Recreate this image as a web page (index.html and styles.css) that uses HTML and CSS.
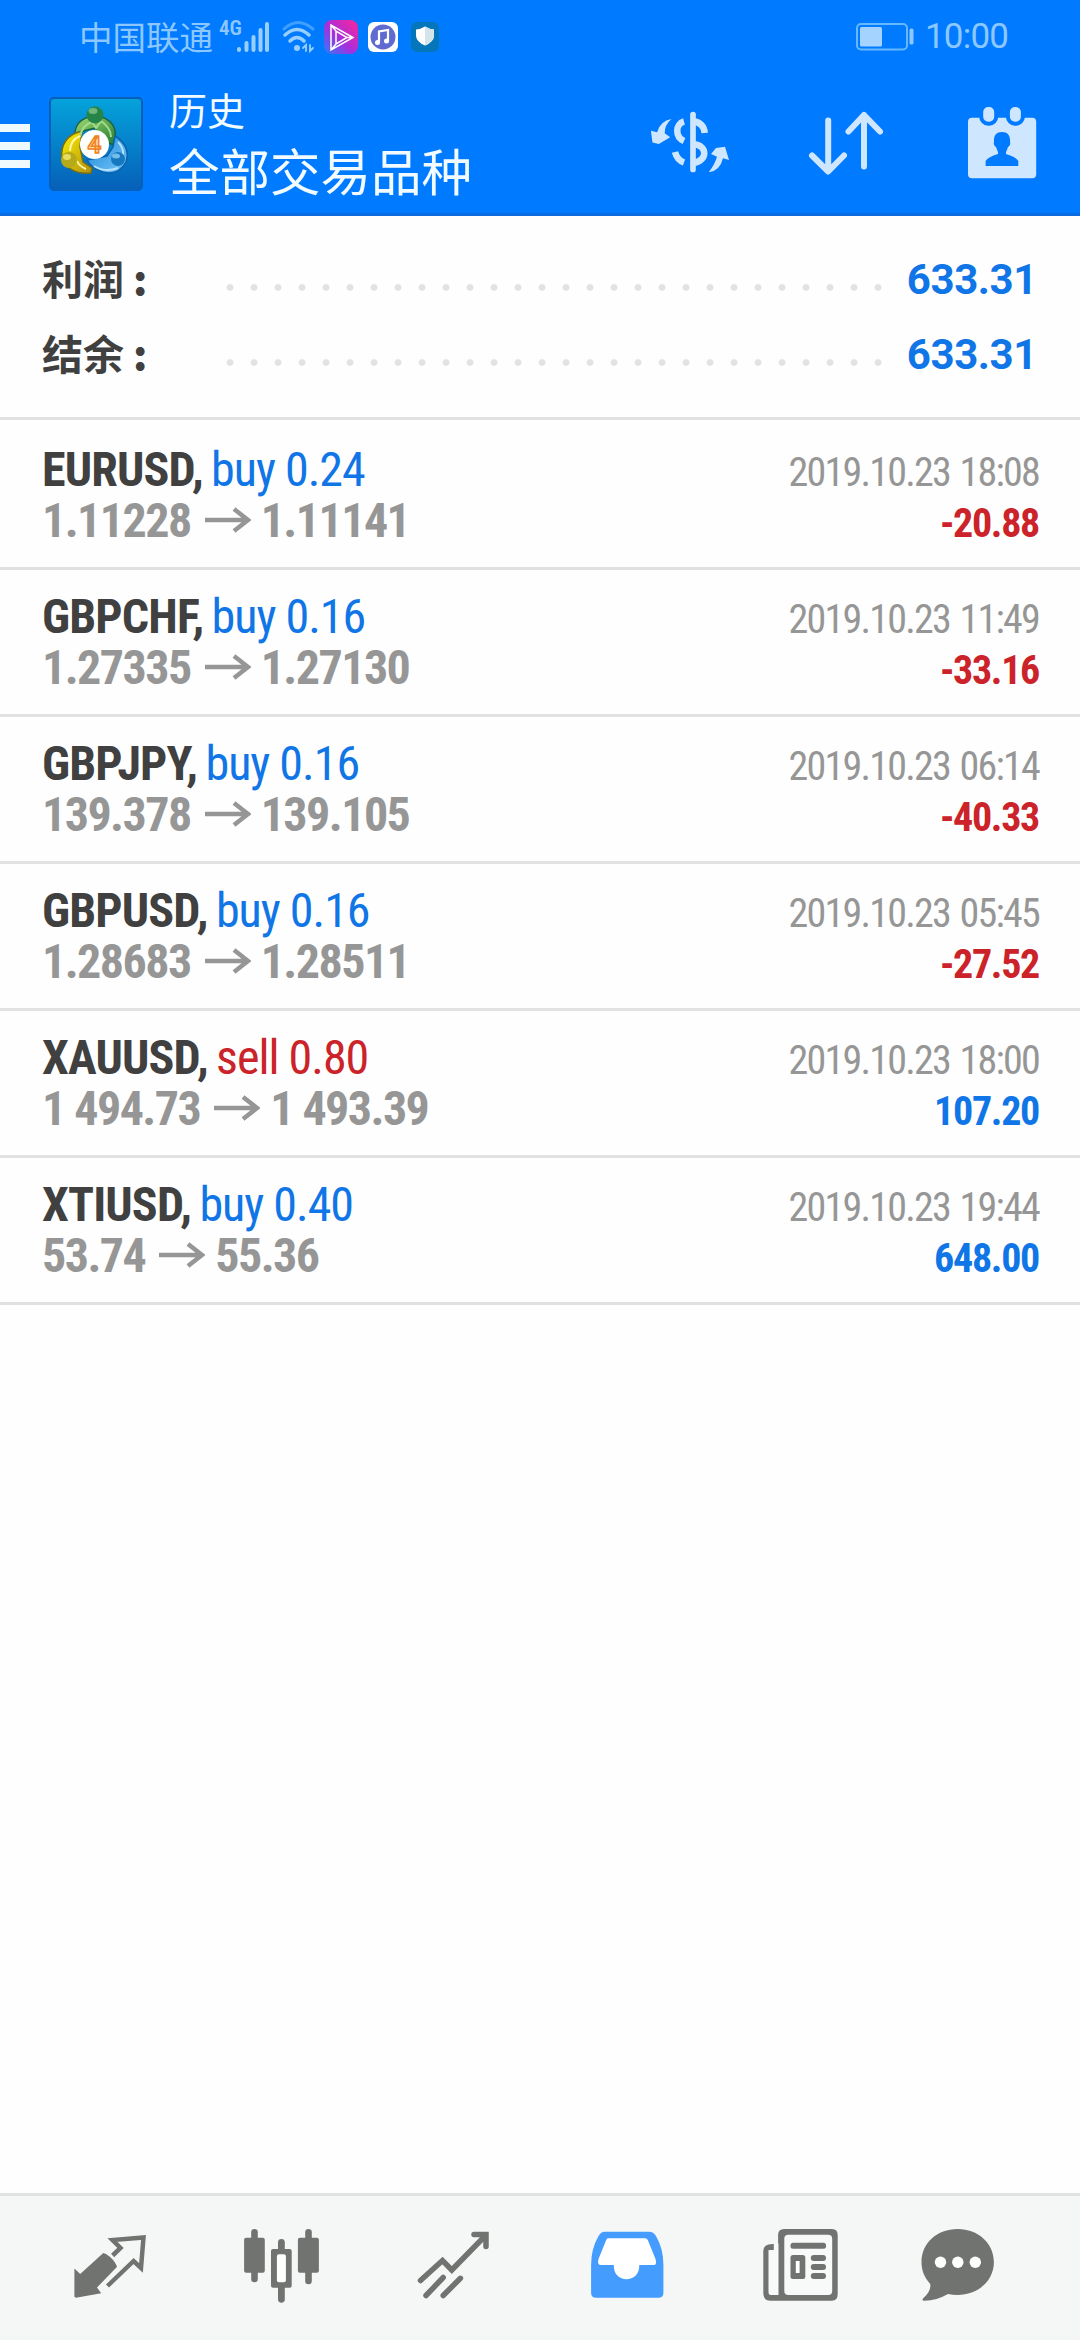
FILE: index.html
```html
<!DOCTYPE html>
<html lang="zh-CN">
<head>
<meta charset="utf-8">
<title>历史</title>
<link rel="stylesheet" href="styles.css">
</head>
<body>
<div class="app">
  <header class="header">
    <div class="status">
      <span class="carrier">中国联通</span>
      <span class="net">4G</span>
      <svg class="signal" width="34" height="34" viewBox="0 0 34 34"><g stroke="#99cfff" stroke-width="4" stroke-linecap="round"><path d="M3 29v1M10.500 23v7M17.500 17v13M24.500 10v20M31 4v26"/></g></svg>
      <svg class="wifi" width="34" height="34" viewBox="0 0 34 34" fill="none" stroke-linecap="round"><path d="M2 9Q16 -4 31 9" stroke="#3fa0ff" stroke-width="3"/><path d="M3 15Q15 4 27 15M8 21Q15 14 22 21" stroke="#99cfff" stroke-width="3.500"/><circle cx="15" cy="28" r="3" fill="#99cfff"/><path d="M24 31v-6l-3 3M28 25v6l3-3" stroke="#99cfff" stroke-width="1.800"/></svg>
      <svg class="app-video" width="34" height="34" viewBox="0 0 34 34"><defs><linearGradient id="vid" x1="0" y1="1" x2="1" y2="0"><stop offset="0" stop-color="#2c7dff"/><stop offset=".45" stop-color="#a52fdc"/><stop offset="1" stop-color="#ff259b"/></linearGradient></defs><rect width="34" height="34" rx="8" fill="url(#vid)"/><path d="M7 5v25L29 17.500ZM12 11v13l11-6.500ZM7 5l5 6M7 30l5-6M29 17.500h-6" fill="none" stroke="#fff" stroke-width="1.500"/></svg>
      <svg class="app-music" width="30" height="30" viewBox="0 0 30 30"><rect width="30" height="30" rx="6" fill="#fff"/><circle cx="15" cy="15" r="12.500" fill="#5f6bd0"/><path d="M11 20V9.500L20 8v11" fill="none" stroke="#fff" stroke-width="2.200"/><circle cx="9.500" cy="20.500" r="2.500" fill="#fff"/><circle cx="18.500" cy="19" r="2.500" fill="#fff"/></svg>
      <svg class="app-guard" width="28" height="30" viewBox="0 0 28 30"><rect width="28" height="30" rx="6" fill="#0576ba"/><path d="M5 7.500Q10 7 14 4.500Q18 7 23 7.500V14Q22.500 20 14 23.500Q5.500 20 5 14Z" fill="#fff"/><path d="M14 4.500Q18 7 23 7.500V14Q22.500 20 14 23.500Z" fill="#d3e4ea"/></svg>
      <svg class="battery" width="58" height="28" viewBox="0 0 58 28"><rect x="1" y="1" width="50" height="25.500" rx="4" fill="none" stroke="#66b8ff" stroke-width="2"/><rect x="4" y="4" width="22" height="19.500" rx="1.500" fill="#a5d3ff"/><rect x="53.500" y="5.500" width="4" height="16" rx="1.500" fill="#8cc8ff"/></svg>
      <span class="clock">10:00</span>
    </div>
    <div class="toolbar">
      <div class="menu"><i></i><i></i><i></i></div>
      <svg class="logo" width="94" height="94" viewBox="0 0 94 94">
        <defs>
          <linearGradient id="lbg" x1="0" y1="0" x2="0" y2="1"><stop offset="0" stop-color="#05a3dc"/><stop offset="1" stop-color="#0560b8"/></linearGradient>
          <linearGradient id="lg" x1="0" y1="0" x2="1" y2="1"><stop offset="0" stop-color="#a3dd70"/><stop offset="1" stop-color="#217a35"/></linearGradient>
          <linearGradient id="ly" x1="0" y1="0" x2="1" y2="1"><stop offset="0" stop-color="#fff200"/><stop offset="1" stop-color="#ae8f12"/></linearGradient>
          <linearGradient id="lb" x1="0" y1="0" x2="1" y2="1"><stop offset="0" stop-color="#1686d5"/><stop offset="1" stop-color="#79c7fa"/></linearGradient>
        </defs>
        <rect x="1" y="1" width="92" height="92" rx="4" fill="url(#lbg)" stroke="#075fb8" stroke-width="2"/>
        <path d="M27 43C23 29 32 20 46 19C62 20 71 32 64 48L54 43L46 31L34 34Z" fill="url(#lg)" stroke="#1c6342" stroke-width="1.500"/>
        <path d="M33 34C19 37 11 47 13 62Q21 78 42 76L43 71L34 65L31 50Z" fill="url(#ly)" stroke="#786d16" stroke-width="1.500"/>
        <path d="M66 39Q82 49 77 65Q69 79 54 75Q42 71 38 63L58 59L64 50Z" fill="url(#lb)" stroke="#0b61ae" stroke-width="1.500"/>
        <path d="M31 40Q33 28 43 25L47 31L52 24Q62 31 62 40" fill="none" stroke="#a4dc8b" stroke-width="2"/>
        <path d="M21 54Q21 43 31 39M37 72Q30 69 28 64" fill="none" stroke="#fff6a0" stroke-width="2"/>
        <path d="M69 45Q75 51 74 58M45 69Q56 76 69 71" fill="none" stroke="#b7e3ff" stroke-width="2"/>
        <circle cx="46" cy="18" r="8.500" fill="#258447"/><ellipse cx="44" cy="14" rx="4.500" ry="3" fill="#70b779"/>
        <circle cx="20" cy="63" r="8" fill="#b6aa18"/><ellipse cx="18" cy="60" rx="4" ry="3" fill="#e7dd60"/>
        <circle cx="69" cy="62" r="7" fill="#1678bf"/><ellipse cx="67" cy="59" rx="4" ry="2.500" fill="#75bce8"/>
        <circle cx="45.500" cy="47.500" r="14.500" fill="#fff"/>
        <text x="45.500" y="56" text-anchor="middle" class="logo-num">4</text>
      </svg>
      <div class="titles"><div class="title">历史</div><div class="subtitle">全部交易品种</div></div>
      <div class="actions">
        <svg width="80" height="80" viewBox="0 0 80 80"><g fill="none" stroke="#cfe6ff" stroke-width="6.500"><path d="M43 14.500v55" stroke-width="5.700" stroke-linecap="round"/><path d="M34 21.500C25 24 25 37 34 41M43 21Q54 23 54.700 33M43 44C58 45 58 61 43 63M25 52Q27 60 34 62.500"/></g><path d="M21.500 19Q14.500 25 14.700 33.300L20.200 37.300L8.800 44L2.500 42.500L.9 30.700L7.100 32.300Q10 21 21.500 19ZM58.700 72.300Q65 64 67 56.700L61 54L66 48L75 46.700L79 60L73 58.300Q70 71 58.700 72.300Z" fill="#cfe6ff"/></svg>
        <svg width="80" height="80" viewBox="0 0 80 80" fill="none" stroke="#cfe6ff" stroke-width="6" stroke-linecap="round" stroke-linejoin="round"><path d="M22.200 20.500V71M6 55.500L22.200 71.500L38 55.500M58 66.500V15M42.500 31.500L58 15L74 31.500"/></svg>
        <svg width="80" height="80" viewBox="0 0 80 80"><rect x="6" y="17.700" width="68.200" height="60.600" rx="4" fill="#cfe6ff"/><g fill="#cfe6ff" stroke="#007aff" stroke-width="4"><rect x="19.200" y="5" width="15" height="18.700" rx="7"/><rect x="45.900" y="5" width="15" height="18.700" rx="7"/></g><path d="M40 32C46 32 48.500 36 48 42Q49 45 46 47Q45 50 44 52V54Q54 57 56.300 61V66H23.600V61Q26 57 36 54V52Q35 50 34 47Q31 45 32 42C31.500 36 34 32 40 32Z" fill="#007aff"/></svg>
      </div>
    </div>
  </header>

  <section class="summary">
    <div class="sum-row"><span class="sum-label">利润<b>:</b></span><span class="dots"></span><span class="sum-value">633.31</span></div>
    <div class="sum-row"><span class="sum-label">结余<b>:</b></span><span class="dots"></span><span class="sum-value">633.31</span></div>
  </section>

  <main class="trades">
    <article class="trade">
      <div class="line"><span class="symbol">EURUSD, <em class="buy">buy 0.24</em></span><span class="time">2019.10.23 18:08</span></div>
      <div class="line"><span class="price">1.11228<svg class="arrow" viewBox="0 0 46 26"><path d="M0 13H43M29 2L43 13L29 24"/></svg>1.11141</span><span class="profit loss">-20.88</span></div>
    </article>
    <article class="trade">
      <div class="line"><span class="symbol">GBPCHF, <em class="buy">buy 0.16</em></span><span class="time">2019.10.23 11:49</span></div>
      <div class="line"><span class="price">1.27335<svg class="arrow" viewBox="0 0 46 26"><path d="M0 13H43M29 2L43 13L29 24"/></svg>1.27130</span><span class="profit loss">-33.16</span></div>
    </article>
    <article class="trade">
      <div class="line"><span class="symbol">GBPJPY, <em class="buy">buy 0.16</em></span><span class="time">2019.10.23 06:14</span></div>
      <div class="line"><span class="price">139.378<svg class="arrow" viewBox="0 0 46 26"><path d="M0 13H43M29 2L43 13L29 24"/></svg>139.105</span><span class="profit loss">-40.33</span></div>
    </article>
    <article class="trade">
      <div class="line"><span class="symbol">GBPUSD, <em class="buy">buy 0.16</em></span><span class="time">2019.10.23 05:45</span></div>
      <div class="line"><span class="price">1.28683<svg class="arrow" viewBox="0 0 46 26"><path d="M0 13H43M29 2L43 13L29 24"/></svg>1.28511</span><span class="profit loss">-27.52</span></div>
    </article>
    <article class="trade">
      <div class="line"><span class="symbol">XAUUSD, <em class="sell">sell 0.80</em></span><span class="time">2019.10.23 18:00</span></div>
      <div class="line"><span class="price">1 494.73<svg class="arrow" viewBox="0 0 46 26"><path d="M0 13H43M29 2L43 13L29 24"/></svg>1 493.39</span><span class="profit gain">107.20</span></div>
    </article>
    <article class="trade">
      <div class="line"><span class="symbol">XTIUSD, <em class="buy">buy 0.40</em></span><span class="time">2019.10.23 19:44</span></div>
      <div class="line"><span class="price">53.74<svg class="arrow" viewBox="0 0 46 26"><path d="M0 13H43M29 2L43 13L29 24"/></svg>55.36</span><span class="profit gain">648.00</span></div>
    </article>
  </main>

  <nav class="tabs">
    <svg viewBox="0 0 80 80"><path d="M5.400 43.500L11.200 49L34.300 28L37 29Q45 34 48.100 41.700L28 62.500L32.200 68.300L7 72.700L5.400 71.700Z" fill="#717371"/><path d="M43.600 30.500L51.500 23L43.500 15L74.500 12.500L72 43L64.600 36L38.500 61" fill="none" stroke="#717371" stroke-width="4.500"/></svg>
    <svg viewBox="0 0 80 80"><g fill="#717371"><rect x="3.100" y="12.700" width="20.700" height="35" rx="2"/><rect x="10.200" y="4" width="6.600" height="53.300" rx="3.300"/><rect x="30" y="24" width="20.700" height="38.700" rx="2"/><rect x="37" y="14" width="6.800" height="63.700" rx="3.400"/><rect x="56.900" y="12.700" width="21" height="35" rx="2"/><rect x="64.200" y="4" width="6.600" height="55.300" rx="3.300"/></g><rect x="35.900" y="29.300" width="9" height="28" rx="2" fill="#fff"/></svg>
    <svg viewBox="0 0 80 80" fill="none" stroke="#717371" stroke-width="5.500" stroke-linecap="round"><path d="M7.500 55.500L29.500 35.500L38.800 45L73 10M61 9.500H73V21.500M30.200 52.500L13 70.500M47.400 53.300L30.200 70.500"/></svg>
    <svg viewBox="0 0 80 80"><path d="M19 6.700H63Q68 6.700 70.500 12Q77.400 24 77.400 40V68Q77.400 72.700 72.500 72.700H10Q5.100 72.700 5.100 68V40Q5.100 24 12 12Q14.500 6.700 19 6.700Z" fill="#449cff"/><path d="M22 13.300H59Q61 13.300 62 15.500L69.500 34Q71 40 68 40H53.300C54 59 27 59 27.800 40H15Q11 40 12.500 34L20 15.500Q21 13.300 22 13.300Z" fill="#fff"/></svg>
    <svg viewBox="0 0 80 80"><path d="M15 19Q4.300 18.500 4.300 26V68Q4.300 75.700 11 75.700H73Q78.700 75.700 78.700 69V10Q78.700 4 73 4H25Q19.100 4 19.100 10V19Z" fill="#717371"/><path d="M14.800 18.500H19.500V70H12Q9.500 70 9.500 67V25H14.800Z" fill="#f8f9f9"/><rect x="25.300" y="9.700" width="47.900" height="60.300" rx="4" fill="#f8f9f9"/><g fill="#717371"><rect x="31.500" y="17.700" width="35.500" height="6" rx="2.500"/><rect x="31.500" y="30" width="14.800" height="24" rx="2.500"/><rect x="51.800" y="30" width="15.200" height="6" rx="3"/><rect x="51.800" y="39" width="15.200" height="6" rx="3"/><rect x="51.800" y="48" width="15.200" height="6" rx="3"/></g><rect x="36.800" y="36" width="3.800" height="12" fill="#fff"/></svg>
    <svg viewBox="0 0 80 80"><path d="M39.700 4C60 4 75.900 18 75.900 37C75.900 58 56 74 30 69Q18 76 5.500 75.700Q3.800 75.500 5 73.500Q13.500 66 12.200 59C6 52 3.500 45 3.500 37C3.500 18 19 4 39.700 4Z" fill="#717371"/><g fill="#fff"><circle cx="22.500" cy="37.300" r="5.700"/><circle cx="39.800" cy="37.300" r="5.700"/><circle cx="57.300" cy="37.300" r="5.700"/></g></svg>
  </nav>
</div>
</body>
</html>
```
FILE: styles.css
```css
* { box-sizing: border-box; }
body { margin: 0; background: #fdfefd; font-family: "Roboto Condensed", Roboto, "Noto Sans CJK SC", sans-serif; }
svg { display: block; flex: none; }
.app { width: 1080px; height: 2340px; display: flex; flex-direction: column; overflow: hidden; }

.header { height: 216px; background: #007aff; border-bottom: 3px solid #0a6ce0; flex: none; }
.status { height: 74px; padding: 0 73px 0 79px; display: flex; align-items: center; color: #8cc8ff; }
.carrier { font: 400 33.500px/50px "Noto Sans CJK SC", sans-serif; height: 52px; width: 135px; white-space: nowrap; }
.net { font-size: 21px; line-height: 24px; font-weight: 600; font-stretch: 75%; width: 22px; margin: -18px 0 0 5px; }
.signal { margin-left: -5px; }
.wifi { margin-left: 12px; }
.app-video { margin-left: 8px; }
.app-music { margin-left: 10px; }
.app-guard { margin-left: 13px; }
.battery { margin-left: auto; }
.clock { font: 400 35px/50px Roboto, sans-serif; letter-spacing: -0.8px; margin-left: 11px; width: 82px; white-space: nowrap; }

.toolbar { display: flex; height: 139px; padding-right: 38px; }
.menu { width: 30px; padding-top: 50px; display: flex; flex-direction: column; gap: 10px; }
.menu i { height: 8px; background: #effaff; }
.logo { margin: 23px 0 0 19px; }
.logo-num { font: 700 24px Roboto, sans-serif; fill: #ffd8a0; stroke: #f08322; stroke-width: 1.500px; }
.titles { margin-left: 26px; color: #f2fbff; font-family: "Noto Sans CJK SC", sans-serif; white-space: nowrap; }
.title { font-size: 38px; line-height: 50px; margin-top: 10px; }
.subtitle { font-size: 50.500px; line-height: 70px; margin-top: 0; }
.actions { margin: 26px 0 0 auto; display: flex; gap: 76px; }

.summary { height: 204px; padding: 26px 43px 0 42px; border-bottom: 3px solid #e0e2e1; flex: none; }
.sum-row { height: 75px; display: flex; align-items: center; }
.sum-label { width: 183px; margin-top: -4px; color: #404040; font: 700 41px/71px "Noto Sans CJK SC", sans-serif; }
.sum-label b { margin-left: 9px; }
.dots { width: 672px; height: 7px; margin: 16px 0 0; background: radial-gradient(circle at 5px 3.500px, #e2e2e2 0 2.800px, transparent 4px) 0 0 / 24px 7px; }
.sum-value { margin-left: auto; color: #1075e6; font: 700 42px/75px Roboto, sans-serif; letter-spacing: -0.4px; }

.trades { flex: 1; font-stretch: 75%; }
.trade { height: 147px; padding: 21px 41px 0 42px; border-bottom: 3px solid #e0e2e1; }
.trade:first-child { height: 150px; padding-top: 24px; }
.line { height: 51px; line-height: 51px; display: flex; justify-content: space-between; align-items: baseline; white-space: nowrap; }
.symbol { font-size: 48px; font-weight: 700; color: #404040; letter-spacing: -0.85px; }
.symbol em { font-style: normal; font-weight: 400; letter-spacing: -1px; margin-left: -2px; }
.buy, .gain { color: #1075e6; }
.sell, .loss { color: #cc2229; }
.price { font-size: 48px; font-weight: 700; color: #969696; letter-spacing: -1.550px; }
.arrow { display: inline-block; width: 46px; height: 26px; margin: 0 10px 0 14px; vertical-align: 4px; fill: none; stroke: #969696; stroke-width: 4.500px; }
.time { font-size: 40px; color: #969696; letter-spacing: -1.750px; word-spacing: 2px; }
.profit { font-size: 40px; font-weight: 700; letter-spacing: -1.300px; }

.tabs { height: 147px; padding: 29px 0 0 23px; border-top: 3px solid #e0e2e1; background: #f5f7f6; display: grid; grid-template-columns: 172px 172px 172px 173px 173px 146px; justify-items: center; flex: none; }
.tabs svg { width: 80px; height: 80px; }
```
